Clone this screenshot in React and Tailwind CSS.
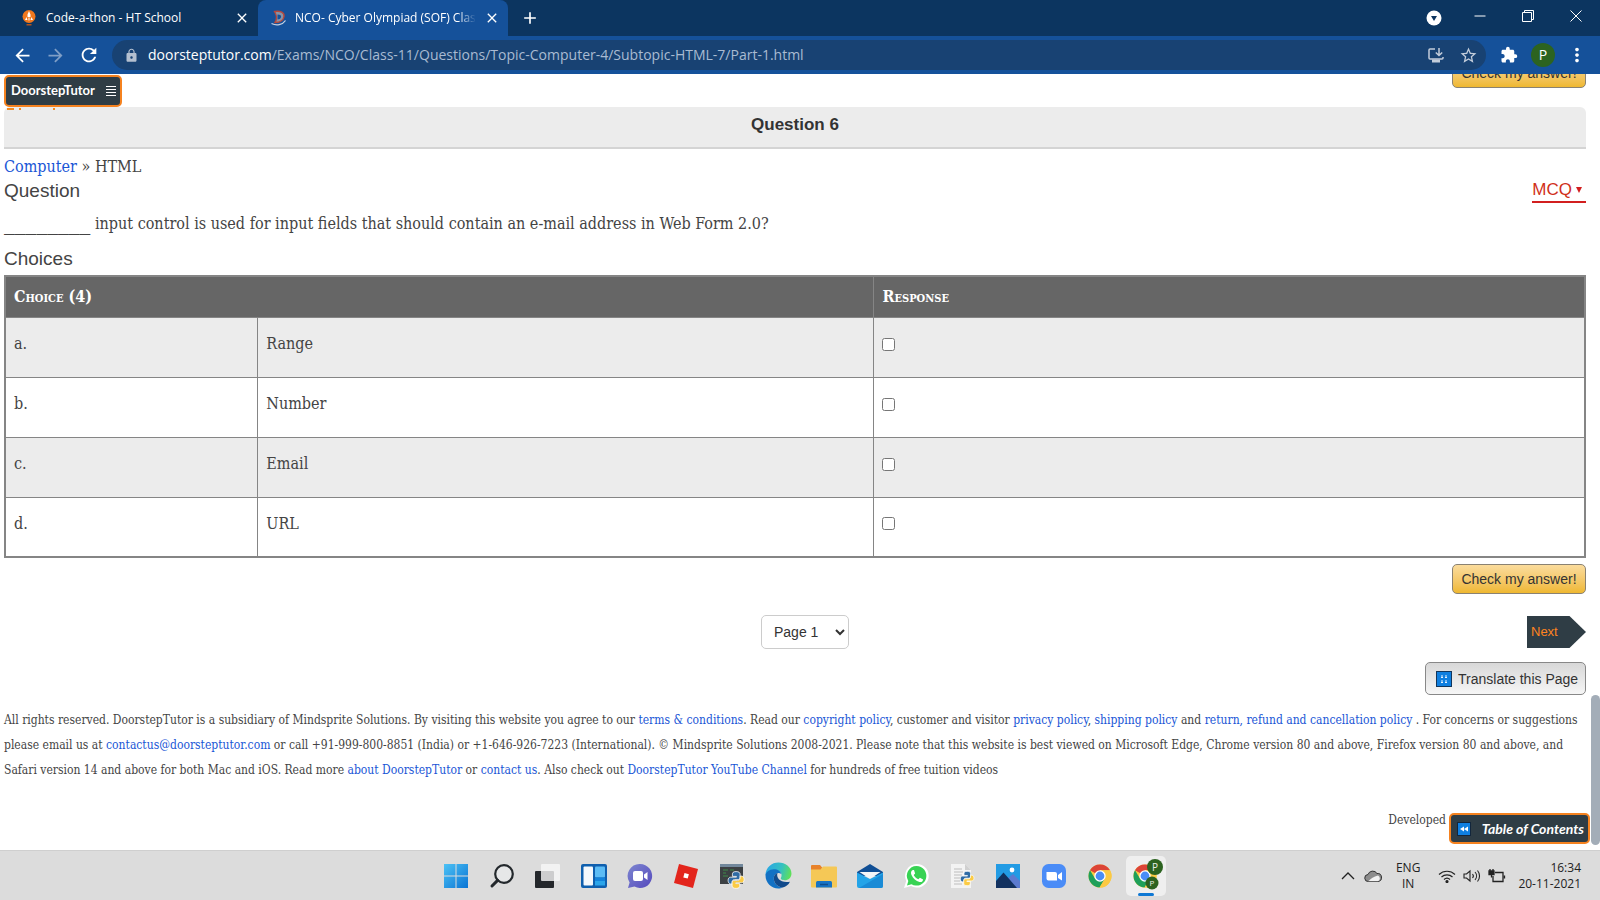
import React from "react";
import {
  MdArrowBack,
  MdArrowForward,
  MdRefresh,
  MdLock,
  MdStarBorder,
  MdExtension,
  MdMoreVert,
  MdClose,
  MdAdd,
} from "react-icons/md";

const SERIF = "font-['DejaVu_Serif_Condensed','DejaVu_Serif',serif]";
const SANS = "font-['Liberation_Sans',sans-serif]";
const UI = "font-['Open_Sans',sans-serif]";

function PythonMark() {
  return (
    <g>
      <path d="M12 2c-4 0-4.6 1.6-4.6 3.2V8h5v1H5c-2 0-3 2-3 4s1 4.400 3 4.400h2V15c0-2 1.400-3 3-3h4.600c1.600 0 2.400-1.200 2.400-2.800v-4C17 3 15.200 2 12 2z" fill="#2f6ba5" stroke="#fff" strokeWidth="1" />
      <path transform="rotate(180 12 12.500)" d="M12 2c-4 0-4.600 1.600-4.600 3.200V8h5v1H5c-2 0-3 2-3 4s1 4.400 3 4.400h2V15c0-2 1.400-3 3-3h4.600c1.600 0 2.400-1.200 2.400-2.800v-4C17 3 15.200 2 12 2z" fill="#fbcb45" stroke="#fff" strokeWidth="1" />
    </g>
  );
}

function ChromeMark() {
  return (
    <g>
      <circle cx="12" cy="12" r="11.500" fill="#fbc943" />
      <path d="M12 12 L2 6.300 A11.500 11.500 0 0 1 22 6.300 L12 6.300 Z" fill="#dc4437" />
      <path d="M2 6.300 A11.500 11.500 0 0 0 11.500 23.500 L16.800 14.800 L12 12 L7.100 14.800 Z" fill="#1fa05a" />
      <path d="M12 6.300 H22 A11.500 11.500 0 0 1 11.500 23.500 L17 14.800 Z" fill="#fbc943" />
      <circle cx="12" cy="12" r="5.700" fill="#fff" />
      <circle cx="12" cy="12" r="4.400" fill="#4a8df6" />
    </g>
  );
}

const taskIcons = [
  {
    name: "Start",
    art: (
      <svg viewBox="0 0 26 26" className="size-[26px]">
        <defs>
          <linearGradient id="win" x1="0" y1="0" x2="1" y2="1">
            <stop offset="0" stopColor="#4cc2f5" />
            <stop offset="1" stopColor="#0a74d4" />
          </linearGradient>
        </defs>
        <path fill="url(#win)" d="M1 1h11.500v11.500H1zM13.500 1H25v11.500H13.500zM1 13.500h11.500V25H1zM13.500 13.500H25V25H13.500z" />
      </svg>
    ),
  },
  {
    name: "Search",
    art: (
      <svg viewBox="0 0 26 26" className="size-[26px]" fill="none" stroke="#23282c" strokeLinecap="round">
        <circle cx="15" cy="11" r="8.800" strokeWidth="2.200" fill="#e6e7e8" />
        <path d="M8.600 17.400 3 23" strokeWidth="3" />
      </svg>
    ),
  },
  {
    name: "Task View",
    art: (
      <svg viewBox="0 0 26 26" className="size-[26px]">
        <rect x="0" y="8" width="19" height="17" rx="1" fill="#24272b" />
        <rect x="6" y="1" width="19" height="17" rx="1" fill="#f7f7f7" fillOpacity=".8" />
      </svg>
    ),
  },
  {
    name: "Widgets",
    art: (
      <svg viewBox="0 0 26 26" className="size-[26px]">
        <rect x="0" y="1" width="26" height="24" rx="2" fill="#0f5fae" />
        <rect x="2.500" y="3.500" width="9.500" height="19" rx="1" fill="#f4f8fc" />
        <rect x="14" y="3.500" width="10" height="11" rx="1" fill="#5cbcf5" />
        <rect x="14" y="14.500" width="10" height="3.500" fill="#1283dc" />
        <rect x="14" y="18" width="10" height="4.500" fill="#2ba5ea" />
      </svg>
    ),
  },
  {
    name: "Chat",
    art: (
      <svg viewBox="0 0 26 26" className="size-[26px]">
        <defs>
          <linearGradient id="chat" x1="0" y1="0" x2="1" y2="1">
            <stop offset="0" stopColor="#7d86d0" />
            <stop offset="1" stopColor="#5549bd" />
          </linearGradient>
        </defs>
        <path d="M13 1a12 12 0 1 1-5.500 22.600L1 25l1.600-5.500A12 12 0 0 1 13 1z" fill="url(#chat)" />
        <rect x="6" y="8" width="10" height="10" rx="2" fill="#fff" />
        <path d="M17 11.500 20.500 9v8L17 14.500z" fill="#fff" />
      </svg>
    ),
  },
  {
    name: "Roblox",
    art: (
      <svg viewBox="0 0 26 26" className="size-[26px]">
        <path d="M6 1 25 6 20 25 1 20z" fill="#e3251c" />
        <path d="m11.500 10 4.400 1.200-1.200 4.400-4.400-1.200z" fill="#fff" />
      </svg>
    ),
  },
  {
    name: "Python Console",
    art: (
      <svg viewBox="0 0 26 26" className="size-[26px]">
        <rect x="1" y="1" width="23" height="20" fill="#3c4043" />
        <rect x="1" y="1" width="23" height="3" fill="#72889c" />
        <path d="M4 7h5M4 10h3M4 13h5M11 7h4" stroke="#3f8a4a" strokeWidth="1.200" />
        <g transform="translate(7.500 7) scale(.8)">
          <PythonMark />
        </g>
      </svg>
    ),
  },
  {
    name: "Edge",
    art: (
      <svg viewBox="0 0 26 26" className="size-[27px]">
        <defs>
          <linearGradient id="edgeTop" x1="0" y1=".3" x2="1" y2=".5">
            <stop offset="0" stopColor="#2aa6e6" />
            <stop offset=".6" stopColor="#35c1c0" />
            <stop offset="1" stopColor="#5fe05a" />
          </linearGradient>
        </defs>
        <path d="M.5 13C.5 5 6.500.5 13 .5S25.500 5 25.500 11c0 4-3 6.500-6.500 6.500-2.500 0-4.500-.8-3.500-2.500 1.500-3-.5-7-5-7S1.500 10 .5 13z" fill="url(#edgeTop)" />
        <path d="M.5 13c0-3 3.500-6 8-6 4 0 6.500 2 7.200 4.500C13 9.500 9 11 8.500 15c-.5 5 3.500 9.500 8.500 9.500-1.500.8-2.700 1-4 1C6 25.500.5 20 .5 13z" fill="#1271c4" />
        <path d="M8.500 15c.3-2.500 2-4 3.500-4.400-1.500 5 3 9.900 12 8.400-1.500 3-4 5-7 5.500-5 0-9-4.500-8.500-9.500z" fill="#114a8b" />
      </svg>
    ),
  },
  {
    name: "File Explorer",
    art: (
      <svg viewBox="0 0 26 26" className="size-[26px]">
        <path d="M0 3a1 1 0 0 1 1-1h8l2.500 3H25v6H0z" fill="#e8822a" />
        <path d="M0 6.500h9.500L12 3.500h13a1 1 0 0 1 1 1v19a1 1 0 0 1-1 1H1a1 1 0 0 1-1-1z" fill="#f5c856" />
        <path d="M5 24.500v-5a1.500 1.500 0 0 1 1.500-1.500h13a1.500 1.500 0 0 1 1.500 1.500v5z" fill="#1774c5" />
        <path d="M9 21.500h8" stroke="#0e4e8d" strokeWidth="1.500" />
      </svg>
    ),
  },
  {
    name: "Mail",
    art: (
      <svg viewBox="0 0 26 26" className="size-[26px]">
        <path d="M0 9 13 1l13 8v4H0z" fill="#114f95" />
        <path d="M2.500 9h21L13 16z" fill="#f4f6f8" />
        <path d="M0 9.500 13 16 26 9.500V23a2 2 0 0 1-2 2H2a2 2 0 0 1-2-2z" fill="#24a4e8" />
        <path d="M2 25 26 11v12a2 2 0 0 1-2 2z" fill="#1a8bd6" />
      </svg>
    ),
  },
  {
    name: "WhatsApp",
    art: (
      <svg viewBox="0 0 26 26" className="size-[26px]">
        <path d="M13.500 1a11.800 11.800 0 1 1-5.500 22L1 25l2.200-7A11.800 11.800 0 0 1 13.500 1z" fill="#fff" />
        <path d="M13.500 3a9.800 9.800 0 1 1-5 18.200L4 22.500l1.300-4.600A9.800 9.800 0 0 1 13.500 3z" fill="#38d354" />
        <path d="M9.800 7c-1.800.8-2.300 2.700-1.300 5 1.600 3.400 4.500 6 8 6.900 1.900.4 3.400-.5 3.600-2.500l-3.200-1.700-1.500 1.600c-2.200-.9-3.800-2.500-4.700-4.400l1.400-1.500L11 7z" fill="#fff" />
      </svg>
    ),
  },
  {
    name: "Python File",
    art: (
      <svg viewBox="0 0 26 26" className="size-[26px]">
        <path d="M2 1h14l6 6v18H2z" fill="#f3f3f3" />
        <path d="M16 1v6h6" fill="#d0d0d0" />
        <path d="M5 6h8M5 9h9M5 12h8M5 15h6M5 18h6M5 21h8" stroke="#bdbdbd" strokeWidth="1" />
        <g transform="translate(10 7) scale(.68)">
          <PythonMark />
        </g>
      </svg>
    ),
  },
  {
    name: "Photos",
    art: (
      <svg viewBox="0 0 26 26" className="size-[26px]">
        <rect x="1" y="1" width="24" height="24" fill="#229be4" />
        <path d="m12 16 6-5 7 7v7H12z" fill="#5c7bd0" />
        <path d="M1 18 8.500 9.500 22 25H1z" fill="#12315f" />
        <circle cx="17" cy="7" r="2.400" fill="#fff" />
      </svg>
    ),
  },
  {
    name: "Zoom",
    art: (
      <svg viewBox="0 0 26 26" className="size-[26px]">
        <rect x="1" y="1" width="24" height="24" rx="6.500" fill="#4a8cf7" />
        <path d="M5.500 9h8.500a2 2 0 0 1 2 2v6.500H7.500a2 2 0 0 1-2-2zM17 12l4-3v8.500L17 15z" fill="#fff" />
      </svg>
    ),
  },
  {
    name: "Chrome",
    art: (
      <svg viewBox="0 0 24 24" className="size-6">
        <ChromeMark />
      </svg>
    ),
  },
  {
    name: "Chrome profile P",
    active: true,
    art: (
      <svg viewBox="0 0 34 34" className="size-[34px]">
        <g transform="translate(4 5)">
          <ChromeMark />
        </g>
        <circle cx="26" cy="8" r="8" fill="#2c6320" />
        <circle cx="23" cy="24" r="6.500" fill="#2c6320" />
        <g fill="#e8efe6" fontFamily="Open Sans, sans-serif" textAnchor="middle">
          <text x="26" y="11.500" fontSize="10">P</text>
          <text x="23" y="27" fontSize="8">P</text>
        </g>
      </svg>
    ),
  },
];

const choices = [
  ["a.", "Range"],
  ["b.", "Number"],
  ["c.", "Email"],
  ["d.", "URL"],
];

function A({ children }) {
  return (
    <a href="#" className="text-[#1a56d6]">
      {children}
    </a>
  );
}

function CheckButton() {
  return (
    <button className={`${SANS} h-[30px] w-[134px] rounded-[5px] border border-[#8a8272] bg-linear-to-b from-[#fbdc9c] to-[#efb82f] text-sm text-[#333]`}>
      Check my answer!
    </button>
  );
}

function TabStrip() {
  return (
    <div className="flex h-9 items-stretch bg-[#0c3560] text-xs text-white">
      <div className="flex w-[258px] items-center pl-5">
        <svg viewBox="0 0 18 18" className="size-[18px]">
          <circle cx="9" cy="7.500" r="6.500" fill="#f0781e" />
          <path d="m9 2 1.500 3.500V8h-3V5.500zM6.500 8 5 11h2.500zM11.500 8l1.500 3h-2.500zM8.500 8.500h1v3h-1z" fill="#fff" />
          <path d="M6.500 15h5v1.500h-5z" fill="#b5541c" />
        </svg>
        <span className="ml-2 flex-1 whitespace-nowrap">Code-a-thon - HT School</span>
        <button aria-label="Close tab" className="mr-2">
          <MdClose className="size-4" />
        </button>
      </div>
      <div className="flex w-[250px] items-center rounded-t-lg bg-[#15519a] pl-3">
        <svg viewBox="0 0 18 18" className="size-[18px]">
          <path d="M4.500 2.500c6-1 10 1 9.500 5s-3.500 6-9 6c2-3 2-7-.5-11z" fill="#8794a8" stroke="#b5483c" strokeWidth="1.400" />
          <path d="M7.500 5.500c3 0 4 1 3.500 2.800S9 10.500 7.500 10.500z" fill="#15519a" />
          <path d="M1.500 14.500c5 2.500 11 1.500 14-3" stroke="#c5d2e4" strokeWidth="1.300" fill="none" />
        </svg>
        <span className="ml-[7px] flex-1 whitespace-nowrap">
          <span className="inline-block mask-r-from-90%">NCO- Cyber Olympiad (SOF) Clas</span>
        </span>
        <button aria-label="Close tab" className="mr-2">
          <MdClose className="size-4" />
        </button>
      </div>
      <button aria-label="New tab" className="ml-3">
        <MdAdd className="size-5" />
      </button>
      <div className="ml-auto flex items-center">
        <button aria-label="Search tabs" className="mr-[14px]">
          <svg viewBox="0 0 16 16" className="size-4">
            <circle cx="8" cy="8" r="7.500" fill="#fff" />
            <path d="M5 6h6l-3 5z" fill="#0c3560" />
          </svg>
        </button>
        {[
          ["Minimize", "M.5 6h11"],
          ["Restore", "M.5 2.500h9v9h-9zM2.500 2.500v-2h9v9h-2"],
          ["Close", "M.5.5l11 11M11.500.5l-11 11"],
        ].map(([label, d]) => (
          <button key={label} aria-label={label} className="flex w-12 items-center justify-center pb-1">
            <svg viewBox="0 0 12 12" className="size-3" fill="none" stroke="#fff">
              <path d={d} />
            </svg>
          </button>
        ))}
      </div>
    </div>
  );
}

function Toolbar() {
  return (
    <div className="flex h-[38px] items-center bg-[#15519a] pl-3 text-white">
      <button aria-label="Back">
        <MdArrowBack className="size-[21px]" />
      </button>
      <button aria-label="Forward" className="ml-3 text-[#7f9ec6]">
        <MdArrowForward className="size-[21px]" />
      </button>
      <button aria-label="Reload" className="ml-3">
        <MdRefresh className="size-[22px]" />
      </button>
      <div className="ml-3 flex h-[30px] flex-1 items-center rounded-full bg-[#184273] pr-2 pl-3">
        <MdLock className="size-[15px] text-[#b4c0d0]" />
        <div className="ml-[9px] flex-1 text-sm text-[#a9bbd2]">
          <span className="text-white">doorsteptutor.com</span>/Exams/NCO/Class-11/Questions/Topic-Computer-4/Subtopic-HTML-7/Part-1.html
        </div>
        <button aria-label="Install app" className="text-[#c3cddb]">
          <svg viewBox="0 0 18 18" className="size-[18px]" fill="none" stroke="currentColor" strokeWidth="1.500">
            <path d="M8 3H3a1 1 0 0 0-1 1v8a1 1 0 0 0 1 1h12a1 1 0 0 0 1-1v-1" />
            <path d="M12 2v7M8.800 6.500 12 9.500l3.200-3" />
            <path d="M5 15h8" strokeWidth="3" />
          </svg>
        </button>
        <button aria-label="Bookmark" className="ml-[14px] text-[#c3cddb]">
          <MdStarBorder className="size-[19px]" />
        </button>
      </div>
      <button aria-label="Extensions" className="ml-[14px]">
        <MdExtension className="size-[18px]" />
      </button>
      <button aria-label="Profile" className="ml-[13px] size-6 rounded-full bg-[#2c6320] text-sm">
        P
      </button>
      <button aria-label="Menu" className="mr-3 ml-[11px]">
        <MdMoreVert className="size-[22px]" />
      </button>
    </div>
  );
}

function Page() {
  return (
    <div className="relative flex-1 overflow-hidden bg-white text-[#444]">
      <main className={`${SERIF} pr-[14px] pl-1`}>
        <div className="-mt-4 flex justify-end">
          <CheckButton />
        </div>
        <h2 className={`${SANS} mt-[19px] h-[42px] rounded-t-md border-b-2 border-[#d4d4d4] bg-[#ececec] text-center text-[17px] leading-9 font-bold text-[#333]`}>
          Question 6
        </h2>
        <div className="mt-[6px] text-base leading-6">
          <A>Computer</A> » HTML
        </div>
        <div className={`${SANS} flex h-6 items-start justify-between`}>
          <h3 className="text-[19px] leading-6">Question</h3>
          <button className="flex items-center gap-1 border-b-2 border-[#d21f1f] pr-1 text-[17px] leading-[22px] text-[#d0301a]">
            MCQ
            <svg viewBox="0 0 6 6" className="size-[6px]">
              <path d="M0 0h6L3 6z" fill="#d21f1f" />
            </svg>
          </button>
        </div>
        <p className="mt-[6px] h-7 text-base leading-7">
          <span className="text-2xl leading-none">________</span> input control is used for input fields that should contain an e-mail address in Web Form 2.0?
        </p>
        <h3 className={`${SANS} mt-[10px] text-[19px] leading-6`}>Choices</h3>
        <table className="mt-1 w-full table-fixed border-collapse border-2 border-[#858585] text-base">
          <colgroup>
            <col className="w-[16%]" />
            <col className="w-[39%]" />
            <col className="w-[45%]" />
          </colgroup>
          <thead>
            <tr className="h-[41px] bg-[#666] text-left text-white [font-variant:small-caps]">
              <th colSpan={2} className="border border-[#858585] px-2 font-bold">Choice (4)</th>
              <th className="border border-[#858585] px-2 font-bold">Response</th>
            </tr>
          </thead>
          <tbody>
            {choices.map(([letter, label]) => (
              <tr key={letter} className="h-[60px] odd:bg-[#ececec]">
                <td className="border border-[#858585] px-2 pb-[6px]">{letter}</td>
                <td className="border border-[#858585] px-2 pb-[6px]">{label}</td>
                <td className="border border-[#858585] px-2 pb-[6px]">
                  <input type="checkbox" aria-label={label} className="block size-[13px]" />
                </td>
              </tr>
            ))}
          </tbody>
        </table>
        <div className="mt-[6px] flex justify-end">
          <CheckButton />
        </div>
        <nav className={`${SANS} mt-[21px] grid grid-cols-[1fr_auto_1fr] items-center`}>
          <select aria-label="Page" className="col-start-2 ml-5 h-[34px] w-[88px] rounded-[5px] border border-[#ccc] bg-white pl-2 text-sm text-[#333]">
            <option>Page 1</option>
          </select>
          <a
            href="#"
            className="flex h-8 w-[59px] items-center justify-self-end bg-[#2f3d45] pl-1 text-[13px] text-[#ff8420] [clip-path:polygon(0_0,72%_0,100%_50%,72%_100%,0_100%)]"
          >
            Next
          </a>
        </nav>
        <div className={`${SANS} mt-[13px] flex justify-end`}>
          <button className="flex h-[33px] w-[161px] items-center gap-[6px] rounded-[5px] border border-[#888] bg-linear-to-b from-[#d8d8d8] to-[#f6f6f6] pl-[10px] text-sm whitespace-nowrap text-[#333]">
            <svg viewBox="0 0 16 16" className="size-4 shrink-0">
              <rect x=".5" y=".5" width="15" height="15" fill="#0f7fe0" stroke="#12365c" />
              <path d="M5 5h2M9 5h2M5 6.500h2M9 6.500h2M5 10h2M9 10h2M5 11.500h2M9 11.500h2" stroke="#e6f2fd" />
            </svg>
            Translate this Page
          </button>
        </div>
        <footer className="mt-[13px] text-xs">
          <p className="leading-[25px]">
            All rights reserved. DoorstepTutor is a subsidiary of Mindsprite Solutions. By visiting this website you agree to our <A>terms & conditions</A>. Read our <A>copyright policy</A>, customer and visitor <A>privacy policy</A>, <A>shipping policy</A> and <A>return, refund and cancellation policy</A> . For concerns or suggestions please email us at <A>contactus@doorsteptutor.com</A> or call +91-999-800-8851 (India) or +1-646-926-7223 (International). © Mindsprite Solutions 2008-2021. Please note that this website is best viewed on Microsoft Edge, Chrome version 80 and above, Firefox version 80 and above, and Safari version 14 and above for both Mac and iOS. Read more <A>about DoorstepTutor</A> or <A>contact us</A>. Also check out <A>DoorstepTutor YouTube Channel</A> for hundreds of free tuition videos
          </p>
          <p className="mt-[25px] pr-[140px] text-right leading-[25px]">Developed</p>
        </footer>
      </main>
      <svg viewBox="0 0 52 2" className="absolute top-[34px] left-1 h-[2px] w-[52px]">
        <path d="M3 1h7M15 1h2M49 1h2" stroke="#f58a1f" strokeWidth="2" fill="none" />
      </svg>
      <button className="absolute top-px left-1 flex h-8 w-[118px] items-center justify-between rounded-[5px] border-2 border-[#f5821f] bg-[#2f3d45] pr-1 pl-[5px] font-['Lato',sans-serif] text-[13px] font-bold text-white">
        DoorstepTutor
        <svg viewBox="0 0 10 10" className="size-[10px]" stroke="#fff">
          <path d="M0 .5h10M0 3.500h10M0 6.500h10M0 9.500h10" />
        </svg>
      </button>
      <button className="absolute right-[10px] bottom-[6px] flex h-[31px] w-[141px] items-center justify-between rounded-[5px] border-2 border-[#f5821f] bg-[#2f3d45] pr-1 pl-[6px] font-['Lato',sans-serif] text-sm font-bold text-white">
        <svg viewBox="0 0 14 14" className="size-[14px]">
          <rect x=".5" y=".5" width="13" height="13" fill="#0f7fe0" stroke="#12263c" />
          <path d="M7 4.500v5L3 7zM11 4.500v5L7 7z" fill="#fff" />
        </svg>
        <span className="italic">Table of Contents</span>
      </button>
      <div className="absolute right-0 bottom-[5px] h-[150px] w-[9px] rounded-full bg-[#a3adb8]" />
    </div>
  );
}

function Taskbar() {
  return (
    <div className="grid h-[50px] grid-cols-[1fr_auto_1fr] items-center border-t border-[#cfcfcf] bg-[#dcdcdc] pl-[2px] text-[#222]">
      <div className="col-start-2 flex">
        {taskIcons.map(({ name, art, active }) => (
          <button key={name} aria-label={name} className="flex w-[46px] justify-center">
            <span
              className={
                active
                  ? "relative flex size-10 items-center justify-center rounded-[5px] bg-[#efefef]"
                  : "relative flex size-10 items-center justify-center"
              }
            >
              {art}
              {active && <span className="absolute bottom-0 h-[3px] w-4 rounded-full bg-[#0f78d4]" />}
            </span>
          </button>
        ))}
      </div>
      <div className="flex items-center justify-end pr-[19px] text-xs leading-4">
        <svg viewBox="0 0 14 14" className="size-[14px]" fill="none" stroke="#222" strokeWidth="1.300">
          <path d="m1 10 6-6 6 6" />
        </svg>
        <svg viewBox="0 0 18 14" className="ml-[9px] h-[14px] w-[18px]" stroke="#333">
          <path d="M4.500 12.500a3.500 3.500 0 0 1-.5-7 5 5 0 0 1 9-1 4 4 0 0 1 1 8z" fill="#8d8d8d" />
          <path d="M4.500 12.300C7 9.500 9.500 7.500 14 6.500a3.200 3.200 0 0 1 0 5.800z" fill="#f2f2f2" stroke="none" />
        </svg>
        <div className="ml-[14px] text-center">
          ENG
          <br />
          IN
        </div>
        <svg viewBox="0 0 18 14" className="ml-[18px] h-[14px] w-[18px]" fill="none" stroke="#222" strokeWidth="1.200">
          <path d="M1 5.500a11.500 11.500 0 0 1 16 0M3.500 8a8 8 0 0 1 11 0M6 10.500a4.500 4.500 0 0 1 6 0" />
          <circle cx="9" cy="12.500" r="1" fill="#222" />
        </svg>
        <svg viewBox="0 0 18 14" className="ml-[7px] h-[14px] w-[18px]" fill="none" stroke="#222" strokeWidth="1.100">
          <path d="M1 5h2.500L7 2v10L3.500 9H1zM9.500 5a3 3 0 0 1 0 4M12 3a6 6 0 0 1 0 8M14.500 1.500a8.500 8.500 0 0 1 0 11" />
        </svg>
        <svg viewBox="0 0 18 14" className="ml-[7px] h-[14px] w-[18px]" fill="none" stroke="#222" strokeWidth="1.300">
          <path d="M7 3.500h8v9H5V7M16.500 6.500v3" />
          <path d="M1 2h5v3.500H1zM2 0v2M5 0v2M3.500 5.500v3" fill="#222" />
        </svg>
        <div className="ml-3 text-right">
          16:34
          <br />
          20-11-2021
        </div>
      </div>
    </div>
  );
}

export default function App() {
  return (
    <div className={`${UI} flex h-screen flex-col overflow-hidden`}>
      <header>
        <TabStrip />
        <Toolbar />
      </header>
      <Page />
      <Taskbar />
    </div>
  );
}
